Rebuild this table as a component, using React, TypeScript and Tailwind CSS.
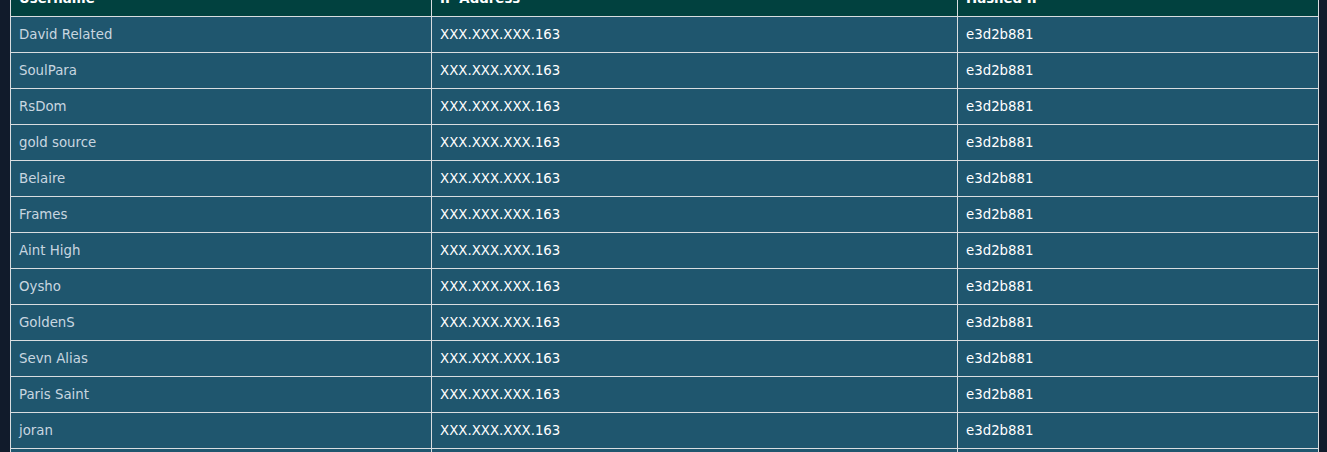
import React from "react";

const names = [
  "David Related",
  "SoulPara",
  "RsDom",
  "gold source",
  "Belaire",
  "Frames",
  "Aint High",
  "Oysho",
  "GoldenS",
  "Sevn Alias",
  "Paris Saint",
  "joran",
  "Extra",
];

export default function App() {
  return (
    <div className="h-[452px] overflow-hidden bg-[#111b2b]" style={{ fontFamily: '"DejaVu Sans", Verdana, sans-serif' }}>
      <div className="-mt-[20px] pl-[10px]">
        <table className="table-fixed border-collapse w-[1309px] text-[13.33px]">
          <colgroup>
            <col className="w-[421px]" />
            <col className="w-[526px]" />
            <col className="w-[361px]" />
          </colgroup>
          <thead>
            <tr className="h-[36px] bg-[#01413f] text-white font-bold">
              <th className="border border-[#d9dde0] px-2 text-left">Username</th>
              <th className="border border-[#d9dde0] px-2 text-left">IP Address</th>
              <th className="border border-[#d9dde0] px-2 text-left">Hashed IP</th>
            </tr>
          </thead>
          <tbody>
            {names.map((n) => (
              <tr key={n} className="h-[36px] bg-[#1f566e]">
                <td className="border border-[#d9dde0] px-2 text-[#c9d6e0]">{n}</td>
                <td className="border border-[#d9dde0] px-2 text-white">XXX.XXX.XXX.163</td>
                <td className="border border-[#d9dde0] px-2 text-white">e3d2b881</td>
              </tr>
            ))}
          </tbody>
        </table>
      </div>
    </div>
  );
}
